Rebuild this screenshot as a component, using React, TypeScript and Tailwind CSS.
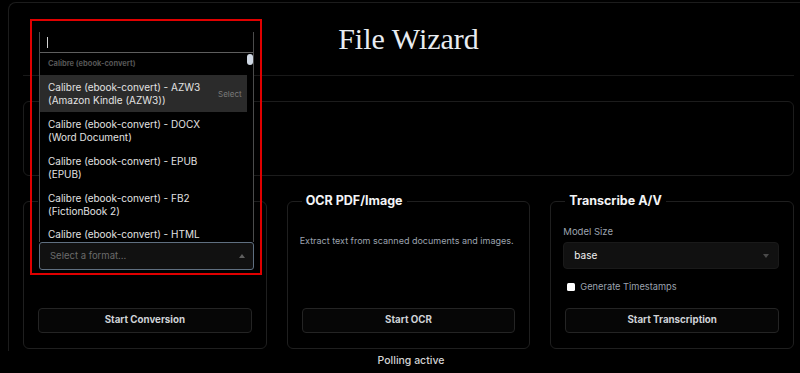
import React from 'react'

const formats = [
  { label: 'Calibre (ebook-convert) - AZW3', sub: '(Amazon Kindle (AZW3))' },
  { label: 'Calibre (ebook-convert) - DOCX', sub: '(Word Document)' },
  { label: 'Calibre (ebook-convert) - EPUB', sub: '(EPUB)' },
  { label: 'Calibre (ebook-convert) - FB2', sub: '(FictionBook 2)' },
  { label: 'Calibre (ebook-convert) - HTML', sub: '' },
]

const Caret = ({ up }: { up?: boolean }) => (
  <svg width="6" height="4" viewBox="0 0 6 4" className="shrink-0">
    {up ? <path d="M0 4 L3 0 L6 4 Z" fill="#5f5f5f" /> : <path d="M0 0 L6 0 L3 4 Z" fill="#4a4a4a" />}
  </svg>
)

const FormatPopover = () => (
  <div className="absolute left-0 right-0 bottom-full h-[210px] flex flex-col bg-black border-x border-[#4b4b4b]">
    <div className="h-[21px] shrink-0 flex items-center pl-[7px] border-b border-[#5e5e5e]">
      <span className="w-px h-[11px] bg-[#d4d4d4]" />
    </div>
    <div className="relative flex-1 overflow-hidden pr-[6px]">
      <div className="h-[22px] flex items-center pl-[8px] text-[7.5px] font-bold text-[#555]">
        Calibre (ebook-convert)
      </div>
      {formats.map((f, idx) => (
        <div
          key={idx}
          className={
            'flex justify-between pl-[8px] pr-[5px] ' +
            (f.sub ? 'h-[37px] items-center ' : 'h-[18px] items-end ') +
            (idx === 0 ? 'bg-[#2b2b2b]' : '')
          }
        >
          <div className="text-[10px] leading-[13px] text-[#e2e2e2] whitespace-nowrap">
            <p>{f.label}</p>
            {f.sub && <p>{f.sub}</p>}
          </div>
          {idx === 0 && <span className="text-[8px] text-[#7a7a7a]">Select</span>}
        </div>
      ))}
      <div className="absolute top-[1px] right-0 w-[6px] h-[11px] rounded-full bg-[#cfd8e3]" />
    </div>
  </div>
)

const ActionButton = ({ children }: { children: React.ReactNode }) => (
  <button className="mt-auto h-[25px] w-full rounded-[4px] border border-[#242424] bg-[#060606] text-[9.75px] font-bold text-[#cfd2d6]">
    {children}
  </button>
)

const Card = ({ title, children }: { title?: string; children: React.ReactNode }) => (
  <fieldset className="flex flex-col h-[156px] rounded-[6px] border border-[#1f1f1f] px-[14px] pb-[15px] min-w-0">
    <legend className="px-[4px] h-[16px] text-[12.5px] leading-[16px] font-bold text-[#f3f4f6]">{title}</legend>
    {children}
  </fieldset>
)

export default function App() {
  return (
    <div className="h-[373px] w-[800px] overflow-hidden bg-black font-['Inter',sans-serif]">
      <div className="ml-2 mt-[2px] w-[800px] h-[349px] rounded-tl-lg border-l border-t border-[#1c1c1c] px-[14px]">
        <header className="h-[73px] flex items-center justify-center border-b border-[#191919]">
          <h1 className="font-['Liberation_Serif',serif] text-[30px] text-[#e8ecf1] pb-[2px]">File Wizard</h1>
        </header>

        <div className="mt-[25px] h-[75px] rounded-[6px] border border-[#1c1c1c]" />

        <div className="mt-[17px] grid grid-cols-3 gap-5">
          <Card>
            <div className="relative mt-[33px] ml-[1px] mr-[-2px]">
              <FormatPopover />
              <div className="h-[28px] flex items-center justify-between rounded-[3px] border border-[#5f6f80] bg-[#111] pl-[10px] pr-[8px]">
                <span className="text-[9.5px] text-[#6b6b6b]">Select a format...</span>
                <Caret up />
              </div>
              <div className="pointer-events-none absolute left-[-9px] right-[-8px] top-[-223px] bottom-[-5px] border-2 border-[#e00000]" />
            </div>
            <ActionButton>Start Conversion</ActionButton>
          </Card>

          <Card title="OCR PDF/Image">
            <p className="mt-[25px] ml-[-2px] text-[9px] leading-[14px] text-[#9ca3af] whitespace-nowrap">
              Extract text from scanned documents and images.
            </p>
            <ActionButton>Start OCR</ActionButton>
          </Card>

          <Card title="Transcribe A/V">
            <label className="mt-[16px] ml-[-2px] text-[9.5px] leading-[14px] text-[#9ca3af]">Model Size</label>
            <div className="mt-[3px] ml-[-2px] h-[27px] flex items-center justify-between rounded-[4px] border border-[#1a1a1a] bg-[#111] pl-[10px] pr-[9px]">
              <span className="text-[10px] text-[#f1f1f1]">base</span>
              <Caret />
            </div>
            <div className="mt-[11px] h-[14px] flex items-center gap-[5px] pl-[2px]">
              <span className="w-[8px] h-[8px] rounded-[1.5px] bg-white" />
              <span className="text-[9.25px] text-[#9ca3af]">Generate Timestamps</span>
            </div>
            <ActionButton>Start Transcription</ActionButton>
          </Card>
        </div>
      </div>
      <div className="h-[20px] pl-[22px] flex items-center justify-center text-[10.5px] font-medium text-[#d4d4d4]">
        Polling active
      </div>
    </div>
  )
}
